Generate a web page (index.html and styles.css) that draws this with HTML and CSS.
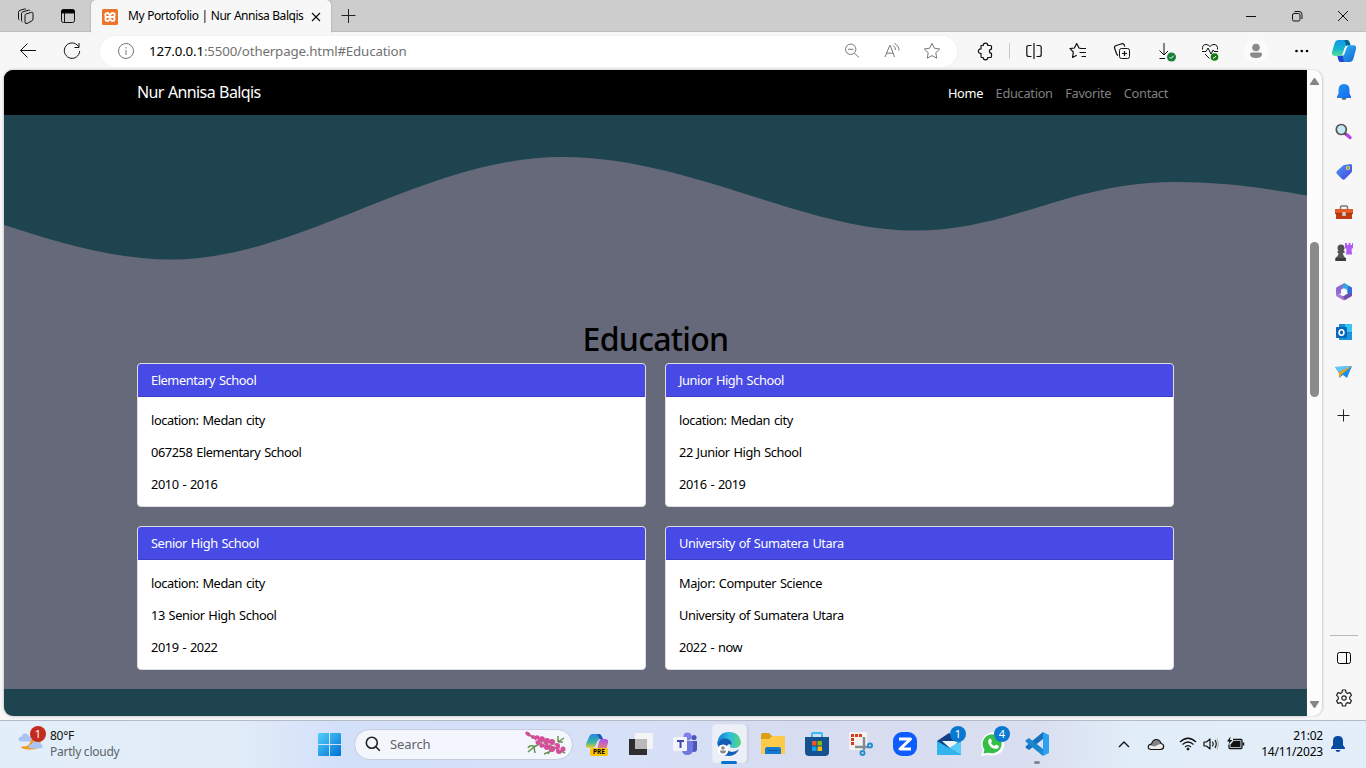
FILE: index.html
```html
<!DOCTYPE html>
<html lang="en">
<head>
<meta charset="utf-8">
<title>My Portofolio | Nur Annisa Balqis</title>
<link rel="stylesheet" href="styles.css">
</head>
<body>
<header class="tabbar">
  <svg class="ic workspaces" viewBox="0 0 24 24"><path d="M10.500 10.500q0-1 1-1.300l5.500-1.700q1.500-.3 1.500 1.200v5.800q0 1-1 1.500l-5 2.700q-2 .7-2-1.500zM8 17.200q-1-.5-1-1.700V9q0-1.500 1.500-2l5.500-1.600q1-.2 1.500.6M4.700 15.300Q4 14.800 4 13.500V7.500Q4 6 5.500 5.500L10 4.200q1-.3 1.600.4" transform="translate(.5 .8)"/></svg>
  <svg class="ic tab-actions" viewBox="0 0 24 24"><rect x="5.500" y="5.500" width="13" height="13" rx="2"/><path d="M5.500 9V7.500q0-2 2-2h9q2 0 2 2V9z" fill="#000"/><path d="M8.500 9v9.500"/></svg>
  <div class="tab">
    <svg class="favicon" viewBox="0 0 16 16"><rect width="16" height="16" rx="1.500" fill="#ef732b"/><path d="M6.200 8H5.200a2 2 0 1 1 2-2.500L8 6.500l.8-1a2 2 0 1 1 2 2.500 2 2 0 1 1-2 2.700L8 9.700l-.8 1a2 2 0 1 1-2-2.700M5.500 8h5" fill="none" stroke="#fff" stroke-width="1.800" stroke-linejoin="round"/></svg>
    <span class="tab-title">My Portofolio | Nur Annisa Balqis</span>
    <svg class="tab-close" viewBox="0 0 10 10"><path d="M1 1l8 8M9 1L1 9"/></svg>
  </div>
  <svg class="new-tab" viewBox="0 0 16 16"><path d="M7.500 1v14M.5 7.500h14"/></svg>
  <div class="window-buttons">
    <svg class="ic" viewBox="0 0 24 24"><path d="M7 12.500h10"/></svg>
    <svg class="ic" viewBox="0 0 24 24"><rect x="7.500" y="9.500" width="7.500" height="7.500" rx="1.500"/><path d="M9.500 7.500H14q3 0 3 3V15"/></svg>
    <svg class="ic" viewBox="0 0 24 24"><path d="M7 7l10 10M17 7L7 17"/></svg>
  </div>
</header>
<div class="toolbar">
  <svg class="ic nav-icon" viewBox="0 0 24 24"><path d="M20 11.500H4.500M11.500 4.500l-7 7 7 7"/></svg>
  <svg class="ic nav-icon" viewBox="0 0 24 24"><path d="M18.500 7.500A7.700 7.700 0 1 0 19.700 12M19 4v4.500h-4.500"/></svg>
  <div class="address">
    <svg class="ic gray" viewBox="0 0 24 24"><circle cx="12" cy="12" r="7.500"/><path d="M12 11v5M12 8v1.500"/></svg>
    <span class="url"><b>127.0.0.1</b>:5500/otherpage.html#Education</span>
    <div class="address-icons">
      <svg class="ic gray" viewBox="0 0 24 24"><circle cx="10.700" cy="10.300" r="5.200"/><path d="M14.500 14.200l4.500 4.300M8 10.300h5.400"/></svg>
      <svg class="ic gray" viewBox="0 0 24 24"><path d="M5 18L9.700 6.500h.6L14.500 18M6.500 14.200h6.500M13 6.500q2.500 1.500 2.500 4.500M14.500 4.500q4.500 2.200 4.500 7"/></svg>
      <svg class="ic gray" viewBox="0 0 24 24"><path d="M12 4.300l2.400 4.900 5.300.8-3.900 3.700.9 5.500-4.700-2.600-4.700 2.600.9-5.500L4.300 10l5.300-.8z"/></svg>
    </div>
  </div>
  <div class="tools">
    <svg class="ic" viewBox="0 0 24 24"><path d="M8 6.500h2.200a2.300 2.300 0 0 1 4.600 0h2.700q1 0 1 1v2.700a2 2 0 1 0 0 4.100v3.200q0 1-1 1h-2.700a2.300 2.300 0 0 1-4.600 0H9q-1 0-1-1v-3.200a2.200 2.200 0 1 1 0-4.300z" stroke-width="1.200"/></svg>
    <i class="divider"></i>
    <svg class="ic" viewBox="0 0 24 24"><path d="M12 4v16M9.500 6.500H6.800q-2 0-2 2v7q0 2 2 2h2.700M14.500 6.500h2.700q2 0 2 2v7q0 2-2 2h-2.700" stroke-width="1.200"/></svg>
    <svg class="ic" viewBox="0 0 24 24"><path d="M20 9.500h-5l-2-.5-2.300-4.500L8.400 9 4 9.700 7.300 13l-.8 5.500 4.200-2.300M13.500 13.500H20M15.500 17.500H20" stroke-width="1.200"/></svg>
    <svg class="ic" viewBox="0 0 24 24"><rect x="9.500" y="9.500" width="10" height="10" rx="2"/><path d="M14.500 12v5M12 14.500h5M8 16.500q-1-.5-1.500-2l-1.800-5q-.7-2 1-2.700l6-2q2-.5 2.500 1l.5 1.700" stroke-width="1.200"/></svg>
    <svg class="ic downloads" viewBox="0 0 24 24"><path d="M9 4v12M4.500 11.500L9 16l4-4M4.500 19.500H10"/><circle cx="16.500" cy="18" r="4.500" fill="#188038" stroke="none"/><path d="M14.500 18l1.500 1.500 2.700-2.800" stroke="#fff"/></svg>
    <svg class="ic" viewBox="0 0 24 24"><path d="M4.500 10.500Q4 5.500 8 5.500q2.500 0 4 2 1.500-2 4-2 4 0 3.500 5M4 12.500h4L10 9l3 6 2-4 1 1.500h4M7 15l4.500 4.500"/><circle cx="16.500" cy="18" r="3.800" fill="#107c10" stroke="none"/><path d="M15 18.500l1 .8 2-2.300" stroke="#fff"/></svg>
    <svg class="ic avatar" viewBox="0 0 24 24"><circle cx="12" cy="12" r="12" fill="#fbfbfb"/><circle cx="12" cy="8.500" r="3.800" fill="#8a8a8a"/><path d="M6 15q0-1.500 1.500-1.500h9q1.500 0 1.500 1.500 0 4-6 4t-6-4z" fill="#8a8a8a"/></svg>
    <svg class="ic" viewBox="0 0 24 24"><g fill="#000" stroke="none"><circle cx="8.500" cy="12" r="1.300"/><circle cx="13.800" cy="12" r="1.300"/><circle cx="19" cy="12" r="1.300"/></g></svg>
  </div>
  <svg class="copilot" viewBox="0 0 24 22"><defs><linearGradient id="cpA" x2="0" y2="1"><stop stop-color="#1297e8"/><stop offset=".55" stop-color="#16b5d2"/><stop offset="1" stop-color="#56df91"/></linearGradient><linearGradient id="cpB" x2="1" y2="1"><stop stop-color="#2bc5f5"/><stop offset="1" stop-color="#185fd8"/></linearGradient></defs><path d="M6.500 0H15q2 0 2.700 2.500l.8 2.700H16q-2.500 0-3.300 2.800l-2 6q-.7 2-2.700 2H3q-4 0-3-4L2.700 3q1-3 3.800-3z" fill="url(#cpA)"/><path d="M12.500 0H15q2 0 2.700 2.500l.8 2.700H16q-1 0-1.800.5z" fill="#086289"/><path d="M17.500 22H9q-2 0-2.700-2.500L5.500 16H8q2.500 0 3.300-2.800l2-6q.7-2 2.700-2h5q4 0 3 4L21.300 19q-1 3-3.800 3z" fill="url(#cpB)"/><path d="M5.500 16H8q1.500 0 2.500-1l1.500 7H9q-2 0-2.700-2.500z" fill="#2145d4"/><path d="M14 6q-1 .7-1.500 2.500l-1.700 5q-.5 1.500-1.800 2.300h1q2 0 2.700-2.300l1.700-5q.5-1.500 1.600-2.500z" fill="#f7f7f7"/></svg>
</div>
<div class="workspace">
  <main class="page">
    <nav class="navbar">
      <span class="brand">Nur Annisa Balqis</span>
      <div class="nav-links"><a class="active">Home</a><a>Education</a><a>Favorite</a><a class="contact">Contact</a></div>
    </nav>
    <svg class="wave" viewBox="0 0 1303 185"><path d="M0 110C56 128 110 144.500 168 144.500C296 144.500 421 42 558 42C686 42 800 115.500 911 115.500C1006 115.500 1066 67 1171 67C1216 67 1256 72 1303 80.500V185H0z"/></svg>
    <section class="education">
      <h1>Education</h1>
      <div class="cards">
        <article class="card"><h2>Elementary School</h2><div class="card-body"><p>location: Medan city</p><p>067258 Elementary School</p><p>2010 - 2016</p></div></article>
        <article class="card"><h2>Junior High School</h2><div class="card-body"><p>location: Medan city</p><p>22 Junior High School</p><p>2016 - 2019</p></div></article>
        <article class="card"><h2>Senior High School</h2><div class="card-body"><p>location: Medan city</p><p>13 Senior High School</p><p>2019 - 2022</p></div></article>
        <article class="card"><h2>University of Sumatera Utara</h2><div class="card-body"><p>Major: Computer Science</p><p>University of Sumatera Utara</p><p>2022 - now</p></div></article>
      </div>
    </section>
  </main>
  <div class="scrollbar">
    <svg viewBox="0 0 9 8"><path d="M4.500 0q.8 0 1.200.9L9 6v1H0V6L3.300.9Q3.700 0 4.500 0z"/></svg>
    <i class="thumb"></i>
    <svg class="down" viewBox="0 0 9 8"><path d="M4.500 0q.8 0 1.200.9L9 6v1H0V6L3.300.9Q3.700 0 4.500 0z"/></svg>
  </div>
  <aside class="sidebar">
    <svg viewBox="0 0 20 20"><defs><linearGradient id="bell" x2="1" y2="1"><stop stop-color="#2196f3"/><stop offset="1" stop-color="#1668ec"/></linearGradient></defs><path d="M7.500 16h5q-.5 2-2.500 2t-2.500-2z" fill="#666"/><path d="M10 2q5.500 0 5.500 6v3.500l1.500 3V16H3v-1.500l1.500-3V8Q4.500 2 10 2z" fill="url(#bell)"/></svg>
    <svg viewBox="0 0 20 20"><path d="M12.500 12.500l3.500 3" stroke="#b645ed" stroke-width="3.500" stroke-linecap="round"/><path d="M10 11l2 2" stroke="#555" stroke-width="2"/><circle cx="7.300" cy="7.500" r="5" fill="#c5e9f7" stroke="#555" stroke-width="1.700"/></svg>
    <svg viewBox="0 0 20 20"><defs><linearGradient id="tag" x2="1" y2="1"><stop stop-color="#4b9af8"/><stop offset="1" stop-color="#4543dc"/></linearGradient></defs><path d="M10.500 3l6.500-1 1 1v6q0 1-1 2l-6 6q-1.500 1.500-3 0l-5-5q-1.500-1.500 0-3l5.500-5q1-.8 2-1z" fill="url(#tag)"/><circle cx="14" cy="6" r="1.500" fill="#6b65b0" stroke="#fbd843" stroke-width="1.200"/></svg>
    <svg viewBox="0 0 20 20"><path d="M6.500 7V5.500q0-1.500 1.500-1.500h4q1.500 0 1.500 1.500V7" fill="none" stroke="#777" stroke-width="1.500"/><path d="M1 7h18v5H1z" fill="#e45b27"/><path d="M2 12h16v5H2z" fill="#c13c13"/><path d="M1 11.500h18" stroke="#9d2d10"/><rect x="8.300" y="10" width="3.500" height="4" rx="1" fill="#c7d5da"/></svg>
    <svg viewBox="0 0 20 20"><path d="M11 1h2v2h1.500V1h2v2H18V1h1v5l-1.500 1 .5 5.500h-6L12.500 7 11 6z" fill="#b25cf5"/><circle cx="7" cy="6" r="3.500" fill="#505050"/><path d="M3.500 9h7v2H9q0 3 2.500 5v3h-10v-3q3-2 3-5h-1z" fill="#555"/><path d="M1.500 16H12v3H1.500z" fill="#3d3d3d"/></svg>
    <svg viewBox="0 0 20 20"><path d="M10.500 1L3 5q-1 .5-1 2v6l5-1.500V7.800l5-3z" fill="#8b6bd8"/><path d="M10.500 1l6.500 4q1 .5 1 2v6.500l-5-2.500V7.800L8 5z" fill="#36a7dc"/><path d="M14 4v9l4 .5V7q0-1.500-1-2z" fill="#3569df"/><path d="M18 12.500q0 1.500-1 2L11 18q-1 .5-2 0l-6-3.500q-1-.5-1-2V11l8 3.500 3-2.500z" fill="#a876d3"/><path d="M18 11v2q0 1-1 1.500L11 18l-2-3.500 4-2.500z" fill="#6950ac"/></svg>
    <svg viewBox="0 0 20 20"><path d="M5 2h13v16H5z" fill="#1b87cf"/><path d="M11 2h7v8h-7z" fill="#38c4f0"/><path d="M5 11l6 3 7-4v8H5z" fill="#1697dd"/><rect x="2" y="5" width="11" height="11" rx="1" fill="#0767bc"/><ellipse cx="7.500" cy="10.500" rx="2.400" ry="2.700" fill="none" stroke="#fff" stroke-width="1.600"/></svg>
    <svg viewBox="0 0 20 20"><path d="M1 5l17-1-5 12-4-3-4 3V11z" fill="#1c90e8"/><path d="M1 5l17-1L5 10z" fill="#65c8f3"/><path d="M18 4L5 10v6l3-4z" fill="#eea21b"/></svg>
    <svg class="add-app" viewBox="0 0 20 20"><path d="M9.500 3.500v12M3.500 9.500h12" stroke="#222" fill="none"/></svg>
    <div class="sidebar-bottom">
      <svg viewBox="0 0 20 20"><rect x="3.500" y="4.500" width="13" height="11" rx="2" fill="none" stroke="#000"/><path d="M12.500 4.500v11" stroke="#000"/></svg>
      <svg viewBox="0 0 20 20" fill="none" stroke="#222" stroke-width="1.200" stroke-linejoin="round"><path d="M8.500 2h3l.6 2.600 1.300.8L16 4.600l1.500 2.600-1.800 2v1.600l1.800 2-1.500 2.600-2.600-.8-1.300.8-.6 2.600h-3l-.6-2.600-1.300-.8-2.600.8-1.500-2.600 1.800-2V9.200l-1.800-2L4 4.600l2.600.8 1.300-.8z"/><circle cx="10" cy="10" r="2.200"/></svg>
    </div>
  </aside>
</div>
<footer class="taskbar">
  <div class="weather">
    <div class="weather-icon">
      <svg viewBox="0 0 28 28"><path d="M22 4Q25 17 14 17.500T3 14.500q9 1 10-7z" fill="#f39a22"/><path d="M4 9.500q-4 0-3.500-3Q1 4.500 4 4.500q0-3 3-3t4 3h2v5z" fill="#a9c3f2"/><path d="M14 16.500q-3.500 0-3.200-2.700.4-2 3.200-1.800 1-3.500 4.500-3t3.500 2.700q2.500.3 2.500 2.500 0 2.300-2.500 2.300z" fill="#a8c5f5"/></svg>
      <span class="badge red">1</span>
    </div>
    <div class="weather-text"><strong>80°F</strong><span>Partly cloudy</span></div>
  </div>
  <svg class="start" viewBox="0 0 23 23"><defs><linearGradient id="win" x2="1" y2="1"><stop stop-color="#52d1fc"/><stop offset="1" stop-color="#006fd3"/></linearGradient></defs><path d="M1 0h10v11H0V1q0-1 1-1zM12 0h10q1 0 1 1v10H12zM0 12h11v11H1q-1 0-1-1zM12 12h11v10q0 1-1 1H12z" fill="url(#win)"/></svg>
  <div class="search">
    <svg class="magnifier" viewBox="0 0 16 16"><circle cx="6.800" cy="6.800" r="5.500"/><path d="M10.800 10.800l4 4"/></svg>
    <span>Search</span>
    <svg class="flower" viewBox="0 0 42 26"><g stroke="#649449" stroke-width="1.500" fill="none"><path d="M2 3L40 22M10 16q-5-3-7 1M9 16l-6 5M9 16l1 6M14 13l-5 3M33 11l6-4M33 11l5 0M33 11l0-6M26 20l-7 3M26 18l-3 5"/></g><g fill="#d44d98"><ellipse cx="3" cy="3" rx="3" ry="1.800" transform="rotate(35 3 3)"/><circle cx="8" cy="6" r="2"/><circle cx="12" cy="7" r="2.700"/><circle cx="13" cy="11" r="2.500"/><circle cx="17" cy="8" r="2.800"/><circle cx="17" cy="14" r="2.700"/><circle cx="22" cy="10" r="3"/><circle cx="22" cy="16" r="3"/><circle cx="27" cy="11" r="3"/><circle cx="27" cy="18" r="3"/><circle cx="32" cy="15" r="3"/><circle cx="34" cy="20" r="3"/><circle cx="38" cy="18" r="2.500"/></g><g fill="#efa0ca"><circle cx="12" cy="9" r="1.200"/><circle cx="18" cy="12" r="1.200"/><circle cx="24" cy="13" r="1.200"/><circle cx="30" cy="15" r="1.300"/><circle cx="35" cy="18" r="1.200"/></g></svg>
  </div>
  <div class="apps">
    <div class="app"><svg viewBox="0 0 24 24"><defs><linearGradient id="preA" x2="0" y2="1"><stop stop-color="#2483e4"/><stop offset=".6" stop-color="#39b7a1"/><stop offset="1" stop-color="#f3cf28"/></linearGradient><linearGradient id="preB" x2="0" y2="1"><stop stop-color="#a855ef"/><stop offset="1" stop-color="#f28367"/></linearGradient></defs><path d="M8 2h6q2 0 3 3l1 2h-3q-2 0-3 3l-1.500 4q-1 2-3 2H4q-4 0-3-4l3-7q1-3 4-3z" fill="url(#preA)"/><path d="M14 2q2 0 3 3l1 2h-3l-3-5z" fill="#1e55b8"/><path d="M16 7h4q4 0 3 4l-2 7h-9l2-8q.5-3 2-3z" fill="url(#preB)"/></svg><span class="pre">PRE</span></div>
    <div class="app"><svg viewBox="0 0 24 24"><path d="M0 7h18v16H0z" fill="#2e2e2e"/><path d="M6 1h18v16H6z" fill="#f4f4f4"/><path d="M6 7h12v10H6z" fill="#b9b9b9"/></svg></div>
    <div class="app"><svg viewBox="0 0 24 24"><circle cx="14.500" cy="4.500" r="4" fill="#7a82e5"/><circle cx="21" cy="5.500" r="2.600" fill="#4c55bd"/><path d="M16 9h8v8q0 3-3 3-5 0-5-5z" fill="#4c55bd"/><path d="M9 9h11v8q0 6-6 6-5 0-5-6z" fill="#6e78de"/><rect y="5" width="14" height="14" rx="1" fill="#f2f3fc"/><path d="M4 9h7M7.500 9v7" stroke="#4048ae" stroke-width="2" fill="none"/></svg></div>
    <div class="app active-app"><svg viewBox="0 0 24 24"><defs><linearGradient id="edge" x2="1"><stop stop-color="#1577cf"/><stop offset=".5" stop-color="#28bce1"/><stop offset="1" stop-color="#59d779"/></linearGradient></defs><path d="M0 13Q1 0 12 0t12 11q-1 5-7 5-4 0-4-2 2-2 1-5-4-4-9 0-4 3-5 4z" fill="url(#edge)"/><path d="M1 12Q4 5 11 7q5 2 3 6-3-2-4 1-1 5 5 6 4 0 7-3-3 7-10 7Q1 24 1 12z" fill="#135eb4"/><circle cx="6" cy="18" r="5.500" fill="#fff"/><circle cx="6" cy="16" r="1.800" fill="#888"/><path d="M3 18.500h6q0 3-3 3t-3-3z" fill="#888"/></svg></div>
    <div class="app"><svg viewBox="0 0 24 24"><path d="M0 3q0-2 2-2h6l3 3h11q2 0 2 2v6H0z" fill="#dc9e14"/><path d="M0 7h8l3-3h11q2 0 2 2v16H0z" fill="#fdcb4a"/><path d="M4 22v-5q0-2 2-2h12q2 0 2 2v5z" fill="#1479cf"/><path d="M7 18.500h10" stroke="#0f599c"/></svg></div>
    <div class="app"><svg viewBox="0 0 24 24"><path d="M7 7V2q0-1 1-1h8q1 0 1 1v5" fill="none" stroke="#37bcf1" stroke-width="2"/><path d="M0 5h24v15q0 4-4 4H4q-4 0-4-4z" fill="#155091"/><path fill="#f35325" d="M7 9h4.500v4.500H7z"/><path fill="#81bc06" d="M12.500 9H17v4.500h-4.500z"/><path fill="#05a6f0" d="M7 14.500h4.500V19H7z"/><path fill="#ffba08" d="M12.500 14.500H17V19h-4.500z"/></svg></div>
    <div class="app"><svg viewBox="0 0 24 24"><rect width="18" height="18" y="0" rx="2" fill="#f5f3f1"/><path d="M3.500 13V3.500H14" fill="none" stroke="#d53e18" stroke-width="3" stroke-dasharray="3 1"/><path d="M15 5v13M6 15h13" stroke="#858b92" stroke-width="2.500"/><circle cx="21" cy="13.500" r="2" fill="none" stroke="#258ed0" stroke-width="2"/><circle cx="13.500" cy="21" r="2" fill="none" stroke="#258ed0" stroke-width="2"/></svg></div>
    <div class="app"><svg viewBox="0 0 24 24"><rect width="24" height="24" rx="9" fill="#0c5cff"/><path d="M6 7h11.500L7 17h11" fill="none" stroke="#fff" stroke-width="3" stroke-linejoin="round"/></svg></div>
    <div class="app"><svg viewBox="0 0 24 24"><path d="M0 9l12-8 12 8v14H0z" fill="#123f85"/><path d="M5 9h17l-8 8z" fill="#eef6fc"/><path d="M0 9l24 14H0z" fill="#31b4ef"/><path d="M24 9v14L12 16z" fill="#55cbf5"/></svg><span class="badge">1</span></div>
    <div class="app"><svg viewBox="0 0 24 24"><path d="M0 24l2-6A11.500 11.500 0 1 1 7 22.500z" fill="#fff"/><path d="M2.500 21.500l1-4A9.500 9.500 0 1 1 8 20.800z" fill="#34bf49"/><path d="M8 7q1-1 2 0l1 2.500-1 1.500q1 2 3.500 3l1.500-1.500 3 1.500q-.5 3-3 3Q8 16 7 9.500z" fill="#fff"/></svg><span class="badge">4</span></div>
    <div class="app running"><svg viewBox="0 0 24 24"><path d="M18 0l6 3v18l-6 3z" fill="#2ba1ef"/><path d="M18 0v7L4 18l-3-2q-1-1 0-2z" fill="#1472bd"/><path d="M18 24v-7L4 6 1 8q-1 1 0 2z" fill="#1b86d0"/></svg></div>
  </div>
  <div class="tray">
    <svg class="ic" viewBox="0 0 24 24"><path d="M7 15l5-5 5 5" stroke-width="1.400"/></svg>
    <svg class="ic cloud" viewBox="0 0 24 24"><path d="M7.500 17.500q-3.500 0-3.300-2.700.3-2.500 3.300-2.800Q9 7.200 12.700 7.500q3.500.5 4.300 4 2.700.5 2.700 3t-3.200 3z" fill="#ececec" stroke="none"/><path d="M5 13q1-1 2.500-1Q9 7.200 12.700 7.500q3.500.5 4.300 4l-6.500 3z" fill="#858585" stroke="none"/><path d="M7.500 17.500q-3.500 0-3.300-2.700.3-2.500 3.300-2.800Q9 7.200 12.700 7.500q3.500.5 4.300 4 2.700.5 2.700 3t-3.200 3z" stroke-width="1.200"/></svg>
    <svg class="ic wifi" viewBox="0 0 24 24"><path d="M4 10q8-7.500 16 0M6.500 12.500q5.500-5 11 0M9 15q3-2.800 6 0" stroke-width="1.200"/><circle cx="12" cy="17" r="1" fill="#111"/></svg>
    <svg class="ic" viewBox="0 0 24 24"><path d="M4 10h2.500L10 7v10l-3.500-3H4zM12.500 9.500q1.500 2.500 0 5M15 8q2.500 4 0 8" stroke-width="1.200"/><path d="M17 6.500q3 5.500 0 11" stroke="#aaa"/></svg>
    <svg class="ic" viewBox="0 0 24 24"><path d="M9 7.500h8q1 0 1 1v7q0 1-1 1H6q-1 0-1-1v-3" stroke-width="1.300"/><path d="M9.500 9h7v6h-10v-2.500z" fill="#111" stroke="none"/><path d="M19.500 10.500v3" stroke-width="1.500"/><path d="M6.500 4.500l-3.500 5h2.500l-1 3L8.500 8H6z" fill="#111" stroke="none"/></svg>
    <div class="clock"><span>21:02</span><span>14/11/2023</span></div>
    <svg class="notice" viewBox="0 0 14 16"><path d="M7 0q5 0 5 5v4l2 3v1H0v-1l2-3V5q0-5 5-5zM4.500 14h5Q9 16 7 16t-2.500-2z" fill="#044aa0"/></svg>
  </div>
</footer>
</body>
</html>
```
FILE: styles.css
```css
* { box-sizing: border-box; }
body { margin: 0; width: 1366px; height: 768px; overflow: hidden; display: flex; flex-direction: column; background: #f7f7f7; font-family: "Noto Sans", "Open Sans", sans-serif; font-size: 13px; color: #000; }
svg { display: block; flex: none; }
.ic { width: 24px; height: 24px; fill: none; stroke: #111; stroke-width: 1; stroke-linejoin: round; }
.gray { stroke: #767676; }

.tabbar { height: 32px; flex: none; display: flex; align-items: center; background: #cdcdcd; border-bottom: 1px solid #bebebe; }
.workspaces { margin-left: 14px; }
.tab-actions { margin-left: 18px; }
.tab { align-self: stretch; width: 240px; height: 33px; margin: 0 0 -1px 11px; padding: 0 10px 0 11px; display: flex; align-items: center; background: #f7f7f7; border-radius: 5px 5px 0 0; box-shadow: 0 0 2px #999; clip-path: inset(0 -3px 0 -3px); }
.favicon { width: 16px; height: 16px; }
.tab-title { width: 174px; margin: -2px 0 0 10px; font-size: 12px; letter-spacing: -.46px; word-spacing: .4px; white-space: nowrap; }
.tab-close { width: 10px; height: 10px; margin-left: 9px; stroke: #111; stroke-width: 1.200; }
.new-tab { width: 16px; height: 16px; margin-left: 10px; stroke: #222; }
.window-buttons { margin-left: auto; display: flex; gap: 22px; padding-right: 11px; }

.toolbar { height: 38px; flex: none; display: flex; align-items: center; }
.nav-icon { margin-left: 16px; }
.nav-icon + .nav-icon { margin-left: 20px; }
.address { width: 857px; height: 31px; margin-left: 16px; padding: 0 13px 0 14px; display: flex; align-items: center; background: #fff; border-radius: 16px; box-shadow: 0 0 3px #ececec; }
.url { margin-left: 11px; font-size: 13.300px; color: #717171; letter-spacing: -.16px; }
.url b { font-weight: 400; color: #000; }
.address-icons { margin-left: auto; display: flex; gap: 16px; }
.tools { display: flex; align-items: center; margin-left: 16px; gap: 20px; }
.divider { width: 1px; height: 16px; background: #c9c9c9; margin: 0 -8px 0 -8px; }
.downloads { margin: 0 -1px 0 1px; }
.avatar { stroke: none; margin: 0 -2px 0 2px; }
.avatar + .ic { margin: 0 -2px 0 2px; }
.copilot { width: 24px; height: 22px; margin-left: 22px; }

.workspace { height: 650px; flex: none; display: flex; padding-left: 4px; }
.page { width: 1303px; height: 646px; background: #1e444f; border-radius: 9px 0 0 9px; overflow: hidden; box-shadow: 0 0 3px #aaa; }
.navbar { height: 45px; padding: 0 139px 0 133px; display: flex; align-items: center; justify-content: space-between; background: #000; }
.brand { margin-top: -1px; font-size: 16px; color: #fff; letter-spacing: -.62px; word-spacing: .6px; }
.nav-links { display: flex; gap: 12.500px; color: #808080; font-size: 12.800px; letter-spacing: -.3px; }
.nav-links .active { color: #fff; }
.wave { width: 1303px; height: 185px; fill: #66697a; }
.education { height: 389px; padding: 17px 133px 0; background: #66697a; }
h1 { height: 46px; margin: 0; font-size: 32px; line-height: 43px; font-weight: 500; letter-spacing: -.7px; text-align: center; }
.cards { display: grid; grid-template-columns: 509px 509px; gap: 19px; }
.card { height: 144px; overflow: hidden; background: #fff; border: 1px solid #dcdce2; border-radius: 4px; }
.card h2 { height: 33px; margin: 0; padding: 0 13px; font-size: 12.800px; line-height: 32px; font-weight: 400; letter-spacing: -.42px; word-spacing: .9px; color: #fff; background: #474ae5; border-bottom: 1px solid #3c3fc8; }
.card-body { padding: 14px 13px 12px; }
.card p { margin: 0 0 13px; font-size: 12.800px; line-height: 19px; letter-spacing: -.42px; word-spacing: .9px; }

.scrollbar { width: 15px; height: 646px; display: flex; flex-direction: column; align-items: center; padding: 8px 0; background: #fcfcfc; border-radius: 0 9px 9px 0; box-shadow: 1px 0 2px #ccc; }
.scrollbar svg { width: 9px; height: 8px; fill: #858585; }
.thumb { width: 9px; height: 155px; margin-top: 156px; border-radius: 5px; background: #8b8b8b; }
.scrollbar .down { margin-top: auto; transform: rotate(180deg); }
.sidebar { width: 44px; display: flex; flex-direction: column; align-items: center; gap: 20px; padding: 12px 0 0; }
.sidebar svg { width: 20px; height: 20px; }
.sidebar .add-app { margin-top: 4px; }
.sidebar-bottom { width: 28px; margin-top: auto; border-top: 1px solid #b8b8b8; display: flex; flex-direction: column; align-items: center; gap: 20px; padding: 12px 0; }

.taskbar { height: 48px; flex: none; display: flex; align-items: center; padding-bottom: 1px; border-top: 1px solid #b5bbc6; background: linear-gradient(90deg, #e2eef8 0, #e1ecf8 240px, #d3e0fa 340px, #d6e1f8 580px, #d7dcf0 820px, #d9def0 1030px, #e1edf8 1130px, #e3eef9); }
.weather { width: 318px; display: flex; align-items: center; padding-left: 18px; }
.weather-icon { width: 28px; height: 28px; position: relative; }
.weather-icon svg { width: 28px; height: 28px; margin-top: 2px; }
.badge { position: absolute; width: 16px; height: 16px; right: -5px; top: -4px; border-radius: 50%; background: #0878d1; color: #fff; font-size: 11px; line-height: 16px; text-align: center; }
.badge.red { right: 0; top: -4px; background: #c42b1c; }
.weather-text { display: flex; flex-direction: column; margin-left: 4px; font-size: 12px; line-height: 16px; letter-spacing: -.25px; color: #5b626a; }
.weather-text strong { color: #111; font-weight: 400; }
.start { width: 23px; height: 23px; }
.search { width: 219px; height: 31px; margin-left: 13px; display: flex; align-items: center; padding: 0 5px 0 10px; background: #f3f6fd; border: 1px solid #c3cbdc; border-radius: 16px; color: #5f6368; }
.search span { margin-left: 9px; letter-spacing: -.1px; }
.magnifier { width: 16px; height: 16px; fill: none; stroke: #222; stroke-width: 1.600; }
.flower { width: 42px; height: 26px; margin-left: auto; }
.apps { display: flex; margin-left: 2px; }
.app { width: 44px; height: 44px; position: relative; display: flex; align-items: center; justify-content: center; }
.app > svg { width: 24px; height: 24px; }
.app .badge { right: 5px; top: 4px; }
.pre { position: absolute; left: 15px; bottom: 10px; width: 18px; background: #fac507; border-radius: 2px; font-size: 6.500px; line-height: 8px; font-weight: 700; text-align: center; }
.active-app::before { content: ""; position: absolute; inset: 2px 4px 3px 5px; border: 1px solid #e8ebf4; border-radius: 4px; background: #eceff8; box-shadow: 2px 0 1px #cbd1e1; z-index: 0; }
.active-app svg { z-index: 1; }
.active-app::after, .running::after { content: ""; position: absolute; bottom: 2px; width: 16px; height: 3px; border-radius: 2px; background: #0873cf; z-index: 1; }
.running::after { width: 6px; background: #858991; }
.tray { display: flex; align-items: center; margin-left: auto; padding-right: 21px; }
.tray .cloud { margin-left: 8px; }
.tray .wifi { margin-left: 8px; }
.clock { width: 75px; display: flex; flex-direction: column; align-items: flex-end; font-size: 12px; line-height: 16px; letter-spacing: -.2px; white-space: nowrap; }
.notice { width: 14px; height: 16px; margin-left: 8px; }
```
